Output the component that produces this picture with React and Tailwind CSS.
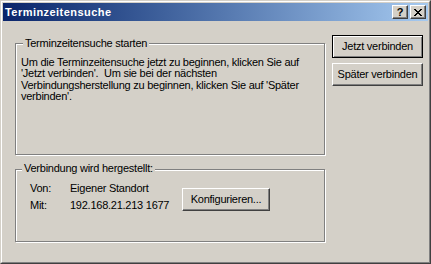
import React from "react";

const font = { fontFamily: '"Liberation Sans", Arial, sans-serif' };

function WinButton({ children, isDefault = false, className = "" }) {
  const frame = isDefault
    ? "border border-black shadow-[inset_1px_1px_0_#ffffff,inset_-1px_-1px_0_#808080]"
    : "border border-t-white border-l-white border-r-[#404040] border-b-[#404040] shadow-[inset_-1px_-1px_0_#808080]";
  return (
    <div
      className={`flex items-center justify-center bg-[#d4d0c8] text-[11px] tracking-[-0.25px] text-black leading-none ${frame} ${className}`}
    >
      {children}
    </div>
  );
}

function CaptionButton({ children }) {
  return (
    <div className="w-[16px] h-[14px] flex items-center justify-center bg-[#d4d0c8] border border-t-white border-l-white border-r-[#404040] border-b-[#404040] shadow-[inset_-1px_-1px_0_#808080]">
      {children}
    </div>
  );
}

function GroupBox({ label, labelLeft, labelTop, className = "", children }) {
  return (
    <div
      className={`relative border border-[#808080] shadow-[inset_1px_1px_0_#ffffff,1px_1px_0_#ffffff] ${className}`}
    >
      <span
        className={`absolute ${labelTop} ${labelLeft} px-[2px] bg-[#d4d0c8] text-[11px] leading-[12px] tracking-[-0.25px] text-black whitespace-nowrap`}
      >
        {label}
      </span>
      {children}
    </div>
  );
}

export default function App() {
  return (
    <div
      style={font}
      className="w-[431px] h-[264px] bg-[#d4d0c8] border border-t-[#d4d0c8] border-l-[#d4d0c8] border-r-[#404040] border-b-[#404040]"
    >
      <div className="h-full flex flex-col p-px border border-t-white border-l-white border-r-[#808080] border-b-[#808080]">
        {/* Title bar */}
        <div className="h-[18px] flex items-center pl-[2px] pr-[2px] bg-gradient-to-r from-[#0a246a] to-[#a6caf0]">
          <span className="flex-1 text-white font-bold text-[11px] tracking-[0.45px] leading-none">
            Terminzeitensuche
          </span>
          <div className="flex gap-[2px]">
            <CaptionButton>
              <span className="text-[11px] font-bold leading-none text-black">?</span>
            </CaptionButton>
            <CaptionButton>
              <svg width="8" height="7" viewBox="0 0 8 7" shapeRendering="crispEdges">
                <path
                  d="M0 0h2v1H0zM6 0h2v1H6zM1 1h2v1H1zM5 1h2v1H5zM2 2h4v1H2zM3 3h2v1H3zM2 4h4v1H2zM1 5h2v1H1zM5 5h2v1H5zM0 6h2v1H0zM6 6h2v1H6z"
                  fill="#000"
                />
              </svg>
            </CaptionButton>
          </div>
        </div>

        {/* Content */}
        <div className="flex-1 flex">
          <div className="pl-[12px] pt-[22px] flex flex-col">
            <GroupBox
              label="Terminzeitensuche starten"
              labelLeft="left-[7px]"
              labelTop="top-[-7px]"
              className="w-[310px] h-[112px]"
            >
              <p className="pl-[5px] pt-[13px] text-[11px] leading-[11.4px] tracking-[-0.25px] text-black whitespace-nowrap">
                Um die Terminzeitensuche jetzt zu beginnen, klicken Sie auf
                <br />
                'Jetzt verbinden'.{"\u00a0 "}Um sie bei der nächsten
                <br />
                Verbindungsherstellung zu beginnen, klicken Sie auf 'Später
                <br />
                verbinden'.
              </p>
            </GroupBox>

            <GroupBox
              label="Verbindung wird hergestellt:"
              labelLeft="left-[6px]"
              labelTop="top-[-8px]"
              className="mt-[14px] w-[310px] h-[73px]"
            >
              <div className="flex pl-[14px] pt-[10px]">
                <div className="grid grid-cols-[40px_112px] auto-rows-[17px] text-[11px] leading-[17px] tracking-[-0.25px] text-black">
                  <span>Von:</span>
                  <span>Eigener Standort</span>
                  <span>Mit:</span>
                  <span>192.168.21.213 1677</span>
                </div>
                <WinButton className="mt-[8px] w-[88px] h-[23px]">Konfigurieren...</WinButton>
              </div>
            </GroupBox>
          </div>

          <div className="pl-[7px] pt-[14px] flex flex-col gap-[5px]">
            <WinButton isDefault className="w-[91px] h-[23px]">
              Jetzt verbinden
            </WinButton>
            <WinButton className="w-[91px] h-[23px]">Später verbinden</WinButton>
          </div>
        </div>
      </div>
    </div>
  );
}
